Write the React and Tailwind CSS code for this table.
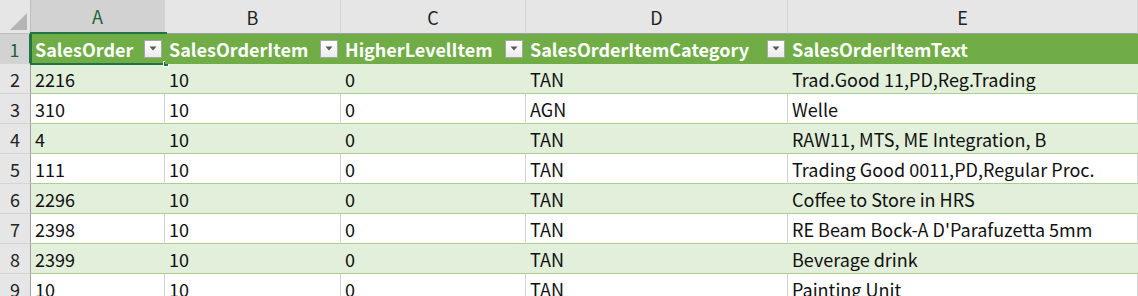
import React from "react";

const cols = ["A", "B", "C", "D", "E"];
const headers = ["SalesOrder", "SalesOrderItem", "HigherLevelItem", "SalesOrderItemCategory", "SalesOrderItemText"];
const rows = [
  ["2216", "10", "0", "TAN", "Trad.Good 11,PD,Reg.Trading"],
  ["310", "10", "0", "AGN", "Welle"],
  ["4", "10", "0", "TAN", "RAW11, MTS, ME Integration, B"],
  ["111", "10", "0", "TAN", "Trading Good 0011,PD,Regular Proc."],
  ["2296", "10", "0", "TAN", "Coffee to Store in HRS"],
  ["2398", "10", "0", "TAN", "RE Beam Bock-A D'Parafuzetta 5mm"],
  ["2399", "10", "0", "TAN", "Beverage drink"],
  ["10", "10", "0", "TAN", "Painting Unit"],
];

const font = { fontFamily: '"Noto Sans CJK JP", "Noto Sans", sans-serif' };

function FilterButton() {
  return (
    <div className="ml-auto mr-[3px] w-[18px] h-[18px] shrink-0 border border-[#a6a6a6] bg-gradient-to-b from-white to-[#ebebeb] flex items-center justify-center">
      <svg width="8" height="5" viewBox="0 0 8 5">
        <path d="M0.5 0.5 L7.5 0.5 L4 4.5 Z" fill="#595959" />
      </svg>
    </div>
  );
}

export default function App() {
  return (
    <div className="w-[1138px] h-[296px] overflow-hidden bg-white text-[18px] leading-none text-[#111]" style={font}>
      <div className="grid grid-cols-[31px_134px_176px_185px_262px_1fr]">
        {/* column header row */}
        <div className="h-[34px] bg-[#e6e6e6] border-b border-r border-[#bdbdbd] relative overflow-hidden">
          <div className="absolute right-[3px] bottom-[3px] w-0 h-0 border-l-[17px] border-l-transparent border-b-[17px] border-b-[#b4b4b4]" />
        </div>
        {cols.map((c, i) => (
          <div
            key={c}
            className={`h-[34px] flex items-center justify-center text-[18px] border-r border-[#d4d4d4] ${
              i === 0 ? "bg-[#d2d2d2] border-b-2 border-b-[#217346] text-[#1e5e38]" : "bg-[#e6e6e6] border-b border-b-[#9f9f9f] text-[#222]"
            }`}
          >
            {c}
          </div>
        ))}

        {/* header row 1 */}
        <div className="h-[30px] bg-[#d2d2d2] border-r-2 border-r-[#217346] border-b border-b-[#d4d4d4] flex items-center justify-center text-[#1e5e38]">
          1
        </div>
        {headers.map((h, i) => (
          <div key={h} className="h-[30px] bg-[#70ad47] border-b border-[#70ad47] flex items-center pl-[4px] relative">
            <span className="text-white font-bold whitespace-nowrap">{h}</span>
            {i < 4 && <FilterButton />}
            {i === 0 && (
              <div className="absolute -left-[1px] -top-[2px] right-[-2px] bottom-[-2px] border-2 border-[#217346] pointer-events-none">
                <div className="absolute -right-[4px] -bottom-[4px] w-[6px] h-[6px] bg-[#217346] border border-white" />
              </div>
            )}
          </div>
        ))}

        {/* data rows */}
        {rows.map((r, ri) => {
          const band = ri % 2 === 0;
          return (
            <React.Fragment key={ri}>
              <div className="h-[30px] bg-[#e6e6e6] border-r border-r-[#9f9f9f] border-b border-b-[#d4d4d4] flex items-center justify-center text-[#222]">
                {ri + 2}
              </div>
              {r.map((v, ci) => (
                <div
                  key={ci}
                  className={`h-[30px] flex items-center pl-[4px] whitespace-nowrap border-b border-b-[#a9d08e] ${
                    band ? "bg-[#e2efda]" : "bg-white border-r border-r-[#d4d4d4]"
                  }`}
                >
                  {v}
                </div>
              ))}
            </React.Fragment>
          );
        })}
      </div>
    </div>
  );
}
